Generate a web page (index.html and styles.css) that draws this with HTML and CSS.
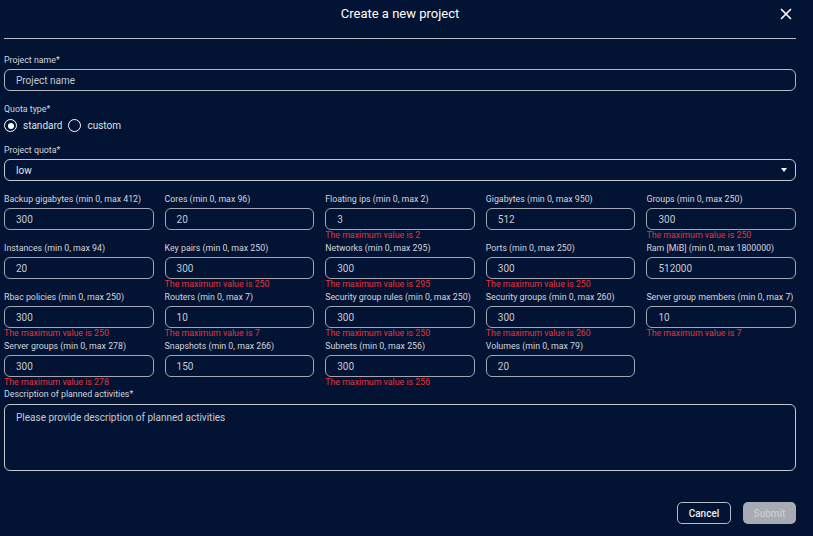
FILE: index.html
```html
<!DOCTYPE html>
<html lang="en">
<head>
  <meta charset="UTF-8">
  <meta name="viewport" content="width=device-width, initial-scale=1.0">
  <title>Create a new project</title>
  <link rel="stylesheet" href="styles.css">
</head>
<body>
  <div class="modal">
    <div class="modal-head">
      <h1 class="modal-title">Create a new project</h1>
      <button class="close-btn" aria-label="Close">
        <svg width="12" height="12" viewBox="0 0 12 12"><path d="M1 1 L11 11 M11 1 L1 11" stroke="#fff" stroke-width="1.6" fill="none"/></svg>
      </button>
    </div>
    <div class="divider"></div>

    <form class="project-form">
      <div class="field">
        <label class="label">Project name*</label>
        <input class="input" type="text" placeholder="Project name">
      </div>

      <div class="field quota-type">
        <label class="label">Quota type*</label>
        <div class="radios">
          <label class="radio"><span class="dot checked"></span>standard</label>
          <label class="radio"><span class="dot"></span>custom</label>
        </div>
      </div>

      <div class="field quota">
        <label class="label">Project quota*</label>
        <div class="select">
          <span>low</span>
          <span class="caret"></span>
        </div>
      </div>

      <div class="quota-grid">
        <div class="cell"><label class="label">Backup gigabytes (min 0, max 412)</label><div class="input">300</div><div class="error"></div></div>
        <div class="cell"><label class="label">Cores (min 0, max 96)</label><div class="input">20</div><div class="error"></div></div>
        <div class="cell"><label class="label">Floating ips (min 0, max 2)</label><div class="input">3</div><div class="error">The maximum value is 2</div></div>
        <div class="cell"><label class="label">Gigabytes (min 0, max 950)</label><div class="input">512</div><div class="error"></div></div>
        <div class="cell"><label class="label">Groups (min 0, max 250)</label><div class="input">300</div><div class="error">The maximum value is 250</div></div>

        <div class="cell"><label class="label">Instances (min 0, max 94)</label><div class="input">20</div><div class="error"></div></div>
        <div class="cell"><label class="label">Key pairs (min 0, max 250)</label><div class="input">300</div><div class="error">The maximum value is 250</div></div>
        <div class="cell"><label class="label">Networks (min 0, max 295)</label><div class="input">300</div><div class="error">The maximum value is 295</div></div>
        <div class="cell"><label class="label">Ports (min 0, max 250)</label><div class="input">300</div><div class="error">The maximum value is 250</div></div>
        <div class="cell"><label class="label">Ram [MiB] (min 0, max 1800000)</label><div class="input">512000</div><div class="error"></div></div>

        <div class="cell"><label class="label">Rbac policies (min 0, max 250)</label><div class="input">300</div><div class="error">The maximum value is 250</div></div>
        <div class="cell"><label class="label">Routers (min 0, max 7)</label><div class="input">10</div><div class="error">The maximum value is 7</div></div>
        <div class="cell"><label class="label">Security group rules (min 0, max 250)</label><div class="input">300</div><div class="error">The maximum value is 250</div></div>
        <div class="cell"><label class="label">Security groups (min 0, max 260)</label><div class="input">300</div><div class="error">The maximum value is 260</div></div>
        <div class="cell"><label class="label">Server group members (min 0, max 7)</label><div class="input">10</div><div class="error">The maximum value is 7</div></div>

        <div class="cell"><label class="label">Server groups (min 0, max 278)</label><div class="input">300</div><div class="error">The maximum value is 278</div></div>
        <div class="cell"><label class="label">Snapshots (min 0, max 266)</label><div class="input">150</div><div class="error"></div></div>
        <div class="cell"><label class="label">Subnets (min 0, max 256)</label><div class="input">300</div><div class="error">The maximum value is 256</div></div>
        <div class="cell"><label class="label">Volumes (min 0, max 79)</label><div class="input">20</div><div class="error"></div></div>
      </div>

      <div class="field description">
        <label class="label">Description of planned activities*</label>
        <textarea class="textarea" placeholder="Please provide description of planned activities"></textarea>
      </div>

      <div class="actions">
        <button type="button" class="btn btn-cancel">Cancel</button>
        <button type="button" class="btn btn-submit" disabled>Submit</button>
      </div>
    </form>
  </div>
</body>
</html>
```

FILE: styles.css
```css
* {
  box-sizing: border-box;
}

body {
  margin: 0;
  background-color: #021333;
  font-family: Roboto, "Liberation Sans", sans-serif;
  color: #d6d9de;
  overflow: hidden;
}

.modal {
  width: 792px;
  margin-left: 4px;
}

.modal-head {
  height: 27px;
  display: flex;
  align-items: center;
  justify-content: center;
  position: relative;
}
.modal-title {
  margin: 0;
  font-size: 13px;
  font-weight: 400;
  color: #ffffff;
  line-height: 16px;
}
.close-btn {
  position: absolute;
  right: 4px;
  top: 8px;
  width: 12px;
  height: 12px;
  padding: 0;
  border: none;
  background: none;
  display: flex;
}

.divider {
  height: 1px;
  margin-top: 11px;
  background: #bcbec4;
}

.label {
  display: block;
  font-size: 8.8px;
  line-height: 11px;
  color: #d3d6dc;
  margin-bottom: 3px;
  white-space: nowrap;
}

.field {
  margin-top: 16px;
}
.quota-type {
  margin-top: 13px;
}
.quota {
  margin-top: 13px;
}

.input,
.select,
.textarea {
  display: flex;
  align-items: center;
  width: 100%;
  height: 22px;
  padding: 0 11px;
  border: 1px solid #b4b8c1;
  border-radius: 6px;
  background: transparent;
  color: #c6cad1;
  font-family: Roboto, "Liberation Sans", sans-serif;
  font-size: 10px;
  outline: none;
}
.input::placeholder,
.textarea::placeholder {
  color: #c6cad1;
}

.radios {
  display: flex;
  align-items: center;
  height: 13px;
  margin-top: 4px;
  gap: 6px;
}
.radio {
  display: flex;
  align-items: center;
  gap: 6px;
  font-size: 10px;
  color: #dfe2e6;
}
.dot {
  width: 13px;
  height: 13px;
  border: 1.5px solid #ffffff;
  border-radius: 50%;
  display: flex;
  align-items: center;
  justify-content: center;
}
.dot.checked::after {
  content: "";
  width: 6px;
  height: 6px;
  border-radius: 50%;
  background: #ffffff;
}

.select {
  justify-content: space-between;
  color: #e4e6ea;
  border-color: #c4c7ce;
}
.caret {
  width: 0;
  height: 0;
  border-left: 3.5px solid transparent;
  border-right: 3.5px solid transparent;
  border-top: 4px solid #ffffff;
  margin-right: -3px;
}

.quota-grid {
  display: grid;
  grid-template-columns: repeat(5, 1fr);
  column-gap: 11px;
  row-gap: 2px;
  margin-top: 13px;
}
.quota-grid .input {
  border-color: #a2a7b1;
}
.error {
  height: 11px;
  font-size: 8.8px;
  line-height: 11px;
  color: #e3343c;
  white-space: nowrap;
}

.description {
  margin-top: 1px;
}
.description .label {
  margin-bottom: 4px;
}
.textarea {
  display: block;
  height: 67px;
  padding: 7px 11px;
  resize: none;
  border-color: #c4c7ce;
}

.actions {
  display: flex;
  justify-content: flex-end;
  gap: 12px;
  margin-top: 31px;
}
.btn {
  height: 22px;
  width: 54px;
  border-radius: 5px;
  font-family: Roboto, "Liberation Sans", sans-serif;
  font-size: 10px;
  font-weight: 500;
  padding: 0;
}
.btn-cancel {
  background: transparent;
  border: 1px solid #b8bcc4;
  color: #eceef1;
}
.btn-submit {
  width: 53px;
  background: #a7abb3;
  border: none;
  color: #c9ccd2;
}
```
